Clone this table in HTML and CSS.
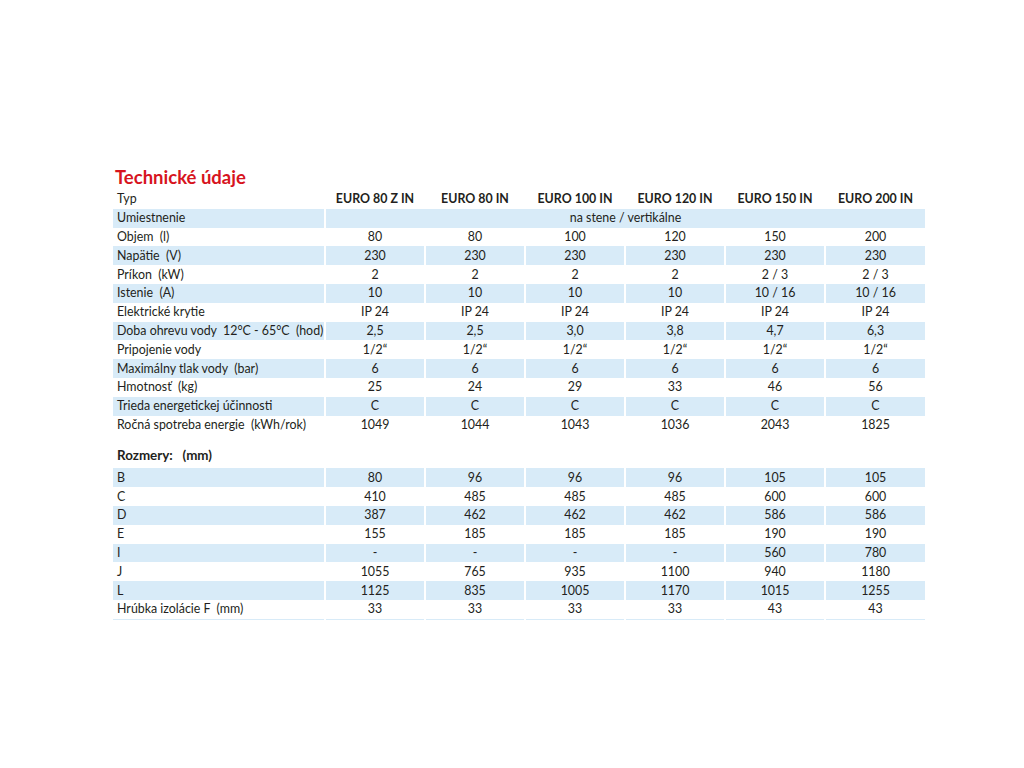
FILE: index.html
```html
<!DOCTYPE html>
<html lang="sk">
<head>
<meta charset="utf-8">
<title>Technické údaje</title>
<link rel="stylesheet" href="styles.css">
</head>
<body>
<div class="page">
  <h1 class="title">Technické údaje</h1>
  <table class="spec">
    <colgroup>
      <col class="c-label"><col class="c-val"><col class="c-val"><col class="c-val"><col class="c-val"><col class="c-val"><col class="c-val">
    </colgroup>
    <tbody>
      <tr class="head"><td>Typ</td><td>EURO 80 Z IN</td><td>EURO 80 IN</td><td>EURO 100 IN</td><td>EURO 120 IN</td><td>EURO 150 IN</td><td>EURO 200 IN</td></tr>
      <tr class="alt"><td>Umiestnenie</td><td colspan="6">na stene / vertikálne</td></tr>
      <tr><td>Objem  (l)</td><td>80</td><td>80</td><td>100</td><td>120</td><td>150</td><td>200</td></tr>
      <tr class="alt"><td>Napätie  (V)</td><td>230</td><td>230</td><td>230</td><td>230</td><td>230</td><td>230</td></tr>
      <tr><td>Príkon  (kW)</td><td>2</td><td>2</td><td>2</td><td>2</td><td>2 / 3</td><td>2 / 3</td></tr>
      <tr class="alt"><td>Istenie  (A)</td><td>10</td><td>10</td><td>10</td><td>10</td><td>10 / 16</td><td>10 / 16</td></tr>
      <tr><td>Elektrické krytie</td><td>IP 24</td><td>IP 24</td><td>IP 24</td><td>IP 24</td><td>IP 24</td><td>IP 24</td></tr>
      <tr class="alt"><td>Doba ohrevu vody  12°C - 65°C  (hod)</td><td>2,5</td><td>2,5</td><td>3,0</td><td>3,8</td><td>4,7</td><td>6,3</td></tr>
      <tr><td>Pripojenie vody</td><td>1/2“</td><td>1/2“</td><td>1/2“</td><td>1/2“</td><td>1/2“</td><td>1/2“</td></tr>
      <tr class="alt"><td>Maximálny tlak vody  (bar)</td><td>6</td><td>6</td><td>6</td><td>6</td><td>6</td><td>6</td></tr>
      <tr><td>Hmotnosť  (kg)</td><td>25</td><td>24</td><td>29</td><td>33</td><td>46</td><td>56</td></tr>
      <tr class="alt"><td>Trieda energetickej účinnosti</td><td>C</td><td>C</td><td>C</td><td>C</td><td>C</td><td>C</td></tr>
      <tr><td>Ročná spotreba energie  (kWh/rok)</td><td>1049</td><td>1044</td><td>1043</td><td>1036</td><td>2043</td><td>1825</td></tr>
      <tr class="section"><td colspan="7">Rozmery:   (mm)</td></tr>
      <tr class="alt"><td>B</td><td>80</td><td>96</td><td>96</td><td>96</td><td>105</td><td>105</td></tr>
      <tr><td>C</td><td>410</td><td>485</td><td>485</td><td>485</td><td>600</td><td>600</td></tr>
      <tr class="alt"><td>D</td><td>387</td><td>462</td><td>462</td><td>462</td><td>586</td><td>586</td></tr>
      <tr><td>E</td><td>155</td><td>185</td><td>185</td><td>185</td><td>190</td><td>190</td></tr>
      <tr class="alt"><td>I</td><td>-</td><td>-</td><td>-</td><td>-</td><td>560</td><td>780</td></tr>
      <tr><td>J</td><td>1055</td><td>765</td><td>935</td><td>1100</td><td>940</td><td>1180</td></tr>
      <tr class="alt"><td>L</td><td>1125</td><td>835</td><td>1005</td><td>1170</td><td>1015</td><td>1255</td></tr>
      <tr class="last"><td>Hrúbka izolácie F  (mm)</td><td>33</td><td>33</td><td>33</td><td>33</td><td>43</td><td>43</td></tr>
    </tbody>
  </table>
</div>
</body>
</html>
```

FILE: styles.css
```css
html, body {
  margin: 0;
  padding: 0;
  background: #ffffff;
}

.page {
  padding: 166px 0 0 113px;
  font-family: Lato, "Liberation Sans", sans-serif;
  color: #231f20;
}

.title {
  margin: 0 0 1px 2px;
  font-size: 18.5px;
  line-height: 23px;
  font-weight: 700;
  color: #d7141e;
}

.spec {
  border-collapse: collapse;
  table-layout: fixed;
  width: 812px;
  font-size: 12.4px;
}

.c-label { width: 212px; }
.c-val { width: 100px; }

.spec td {
  height: 18.8px;
  padding: 0;
  line-height: 16px;
  text-align: center;
  vertical-align: middle;
  white-space: pre;
  border-left: 2px solid #ffffff;
}

.spec td:first-child {
  text-align: left;
  padding-left: 4px;
  border-left: none;
}

.spec .head td {
  font-weight: 700;
}

.spec .head td:first-child {
  font-weight: 400;
}

.spec .alt td {
  background: #d8ebf8;
}

.spec .section td {
  height: 34px;
  vertical-align: bottom;
  padding-bottom: 5px;
  font-weight: 700;
  font-size: 13.4px;
  box-sizing: border-box;
}

.spec .last td {
  border-bottom: 1px solid #d8ebf8;
}
```
